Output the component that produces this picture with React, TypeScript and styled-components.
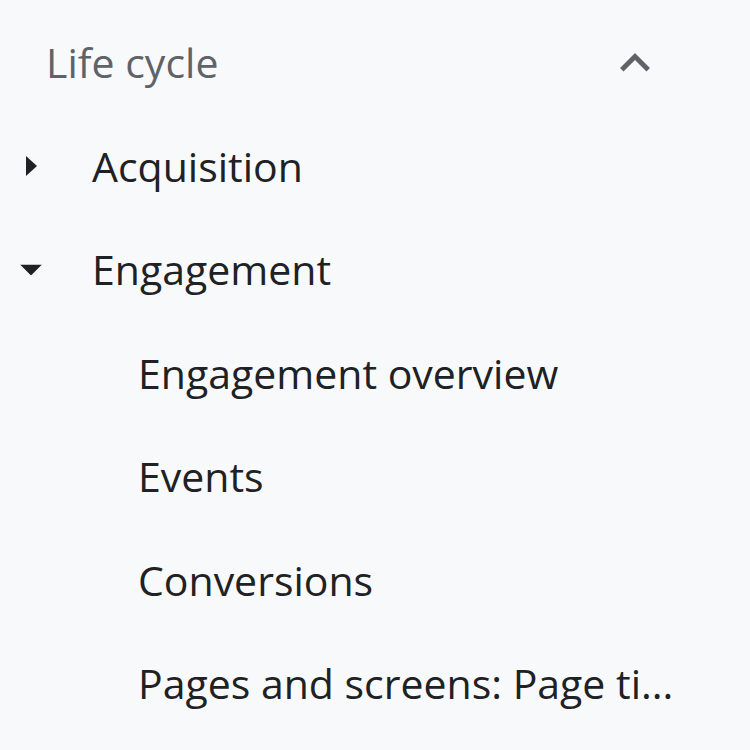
import React from "react";
import styled, { createGlobalStyle } from "styled-components";

const Global = createGlobalStyle`
  html, body { margin: 0; padding: 0; background: #f8f9fa; }
  body { font-family: "Open Sans", Roboto, sans-serif; }
`;

const Nav = styled.nav`
  width: 750px;
  height: 750px;
  overflow: hidden;
  padding-top: 11px;
  box-sizing: border-box;
  display: flex;
  flex-direction: column;
`;

const Row = styled.div<{ $indent: number }>`
  height: 103.5px;
  display: flex;
  align-items: center;
  padding-left: ${(p) => p.$indent}px;
  position: relative;
  box-sizing: border-box;
  flex-shrink: 0;
  font-size: 41px;
  color: #202124;
  white-space: nowrap;
`;

const Header = styled(Row)`
  justify-content: space-between;
  padding-right: 85px;
  color: #5f6368;
`;

const Label = styled.span`
  line-height: 1;
`;

const Caret = styled.svg<{ $left: number }>`
  position: absolute;
  left: ${(p) => p.$left}px;
  top: 50%;
  transform: translateY(-50%);
`;

const items = ["Engagement overview", "Events", "Conversions", "Pages and screens: Page ti..."];

export default function App() {
  return (
    <>
      <Global />
      <Nav>
        <Header $indent={46}>
          <Label>Life cycle</Label>
          <svg width="60" height="60" viewBox="0 0 24 24">
            <path d="M7.41 15.41L12 10.83l4.59 4.58L18 14l-6-6-6 6z" fill="#5f6368" />
          </svg>
        </Header>
        <Row $indent={92}>
          <Caret $left={26} width="11" height="20" viewBox="0 0 11 20">
            <path d="M0 0L11 10L0 20z" fill="#202124" />
          </Caret>
          <Label>Acquisition</Label>
        </Row>
        <Row $indent={92}>
          <Caret $left={20} width="22" height="11" viewBox="0 0 22 11">
            <path d="M0 0H22L11 11z" fill="#202124" />
          </Caret>
          <Label>Engagement</Label>
        </Row>
        {items.map((t) => (
          <Row key={t} $indent={138}>
            <Label>{t}</Label>
          </Row>
        ))}
      </Nav>
    </>
  );
}
